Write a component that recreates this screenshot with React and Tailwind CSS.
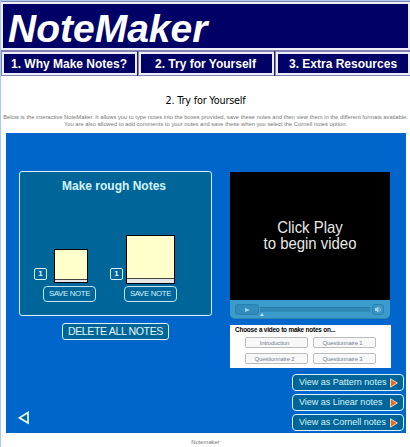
const tabs = [
  { label: "1. Why Make Notes?", box: "w-[137px]", pad: "pl-[7px]" },
  { label: "2. Try for Yourself", box: "w-[137px]", pad: "pl-[14px]" },
  { label: "3. Extra Resources", box: "w-[136px]", pad: "pl-[11px]" },
];

function Tab({ label, box, pad }) {
  return (
    <div className={`${box} h-[25px] shrink-0 border-r border-[#24205f] bg-[#8583b5] py-px pl-px`}>
      <div className={`h-[23px] border-2 border-[#eeeef8] bg-[#000066] ${pad} text-[12px] leading-[20px] font-bold whitespace-nowrap text-white`}>
        {label}
      </div>
    </div>
  );
}

function Note({ box, page, save }) {
  return (
    <div className="flex flex-col">
      <div className="flex h-[50px] items-end">
        <div className="mb-[4px] flex h-[12px] w-[13px] items-center justify-center rounded-[2px] border border-[#d5f3fa] text-[8px] leading-none font-bold text-[#e4f7fb]">
          1
        </div>
        <div className={`${box} flex flex-col border border-black bg-[#ffffcc]`}>
          <div className={`${page} shrink-0 border-b border-[#444444]`} />
          <div className="flex-1 bg-[#e6e6e6]" />
        </div>
      </div>
      <button className={`${save} mt-[2px] h-[16px] w-[53px] rounded-[4px] border border-[#b8e7f2] text-[7.8px] leading-[14px] tracking-[-0.32px] whitespace-nowrap text-[#d5f3fa]`}>
        SAVE NOTE
      </button>
    </div>
  );
}

function NotesPanel() {
  return (
    <div className="h-[145px] w-[193px] rounded-[3px] border border-[#d5f3fa] bg-[#006699]">
      <h2 className="mt-[7px] pr-[3px] text-center text-[12px] leading-[15px] font-bold text-[#d5f3fa]">
        Make rough Notes
      </h2>
      <div className="mt-[40px] flex pl-[14px]">
        <div className="w-[76px]">
          <Note box="ml-[7px] mb-[1px] h-[34px] w-[34px]" page="h-[30px]" save="ml-[9px]" />
        </div>
        <Note box="ml-[3px] h-[49px] w-[49px]" page="h-[43px]" save="ml-[14px]" />
      </div>
    </div>
  );
}

function Player() {
  return (
    <div className="w-[160px]">
      <div className="h-[128px] bg-black pt-[48px] text-center text-[16.4px] leading-[15.5px] whitespace-nowrap text-[#e8e8e8]">
        <div className="scale-x-[0.91]">
          Click Play
          <br />
          to begin video
        </div>
      </div>
      <div className="flex h-[19px] items-start rounded-b-[5px] border-b border-[#3182af] bg-[#3b9bcb] pt-[4px] pl-[5px]">
        <div className="flex h-[11px] w-[24px] items-center justify-center rounded-[3px] border border-[#2b81ad] bg-[#318cbb]">
          <svg className="h-[4px] w-[5px]" viewBox="0 0 5 4">
            <path d="M0 0L5 2L0 4Z" fill="#9bd8f2" />
          </svg>
        </div>
        <div className="mt-[3px] ml-px h-[5px] w-[110px] border-t border-[#287aa5] bg-[#3088b6]">
          <svg className="mt-[5px] h-[3px] w-[4px]" viewBox="0 0 4 3">
            <path d="M2 0L4 3H0Z" fill="#b9e5f5" />
          </svg>
        </div>
        <div className="ml-[2px] flex h-[11px] w-[12px] items-center justify-center rounded-[3px] border border-[#2b81ad] bg-[#3794c4]">
          <svg className="h-[7px] w-[7px]" viewBox="0 0 7 7">
            <path d="M0 2H1.5L3.5 0.5V6.5L1.5 5H0Z" fill="#a4daf0" />
            <path d="M4.5 1.5Q6.5 3.5 4.5 5.5" fill="none" stroke="#a4daf0" strokeWidth="0.8" />
          </svg>
        </div>
      </div>
    </div>
  );
}

const videos = ["Introduction", "Questionnaire 1", "Questionnaire 2", "Questionnaire 3"];

function VideoChooser() {
  return (
    <div className="mt-[6px] h-[43px] w-[161px] bg-white pt-[1px]">
      <div className="pl-[5px] text-[6.4px] leading-[8px] font-bold tracking-[-0.19px] whitespace-nowrap text-black">
        Choose a video to make notes on...
      </div>
      <div className="mt-[3px] ml-[15px] grid grid-cols-[63px_63px] gap-x-[5px] gap-y-[5px]">
        {videos.map((video) => (
          <button
            key={video}
            className="h-[11px] rounded-[2px] border border-[#bcbcbc] bg-[#f8f8f8] pr-[4px] text-[6px] leading-[8px] tracking-[-0.15px] whitespace-nowrap text-[#758290]"
          >
            {video}
          </button>
        ))}
      </div>
    </div>
  );
}

function ViewButton({ children }) {
  return (
    <button className="flex h-[17px] w-[112px] items-center justify-between rounded-[4px] border border-[#d5f3fa] bg-[#006699] pr-[5px] pl-[6px] text-[9px] leading-none whitespace-nowrap text-[#d9f4fa]">
      {children}
      <svg className="h-[10px] w-[8px]" viewBox="0 0 8 10">
        <path d="M0.5 0.8L7.3 5L0.5 9.2Z" fill="#e96a20" stroke="#f5dfcf" strokeWidth="0.9" />
      </svg>
    </button>
  );
}

export default function App() {
  return (
    <div className="h-[447px] w-[410px] overflow-hidden border-t border-l border-[#a9c9ef] bg-white font-['Liberation_Sans',Arial,sans-serif]">
      <header>
        <div className="h-[50px] border-y border-[#8583b5]">
          <h1 className="h-[48px] border-2 border-[#eeeef8] bg-[#000066] pl-[5px] text-[39px] leading-[49px] font-bold text-white italic">
            NoteMaker
          </h1>
        </div>
        <nav className="flex">
          {tabs.map((tab) => (
            <Tab key={tab.label} {...tab} />
          ))}
        </nav>
      </header>
      <h2 className="mt-[18px] h-[13px] text-center font-['DejaVu_Sans',sans-serif] text-[9.7px] leading-[13px] tracking-[-0.2px] text-black">
        2. Try for Yourself
      </h2>
      <div className="mt-[7px] h-[19px] text-center text-[5.8px] leading-[7px] whitespace-nowrap text-[#777777]">
        <div>Below is the interactive NoteMaker. It allows you to type notes into the boxes provided, save these notes and then view them in the different formats available.</div>
        <div>You are also allowed to add comments to your notes and save these when you select the Cornell notes option.</div>
      </div>
      <main className="ml-[5px] flex h-[300px] w-[400px] bg-[#0066cc]">
        <div className="flex h-full w-[224px] flex-col pt-[38px] pl-[13px]">
          <NotesPanel />
          <button className="mt-[7px] ml-[43px] h-[17px] w-[107px] rounded-[3px] border border-[#d5f3fa] bg-[#006699] text-[10.6px] leading-[15px] tracking-[-0.4px] whitespace-nowrap text-[#e4f7fb]">
            DELETE ALL NOTES
          </button>
          <svg className="mt-[71px] ml-[-1px] h-[14px] w-[12px]" viewBox="0 0 12 14">
            <path d="M10 1.5V12L1.5 6.8Z" fill="#006699" stroke="#e4fbff" strokeWidth="1.7" />
          </svg>
        </div>
        <div className="flex h-full w-[176px] flex-col pt-[39px]">
          <Player />
          <VideoChooser />
          <div className="mt-[6px] ml-[62px] flex flex-col gap-[3px]">
            <ViewButton>View as Pattern notes</ViewButton>
            <ViewButton>View as Linear notes</ViewButton>
            <ViewButton>View as Cornell notes</ViewButton>
          </div>
        </div>
      </main>
      <footer className="mt-[5px] text-center text-[5.8px] leading-[8px] text-[#777777]">Notemaker</footer>
    </div>
  );
}
